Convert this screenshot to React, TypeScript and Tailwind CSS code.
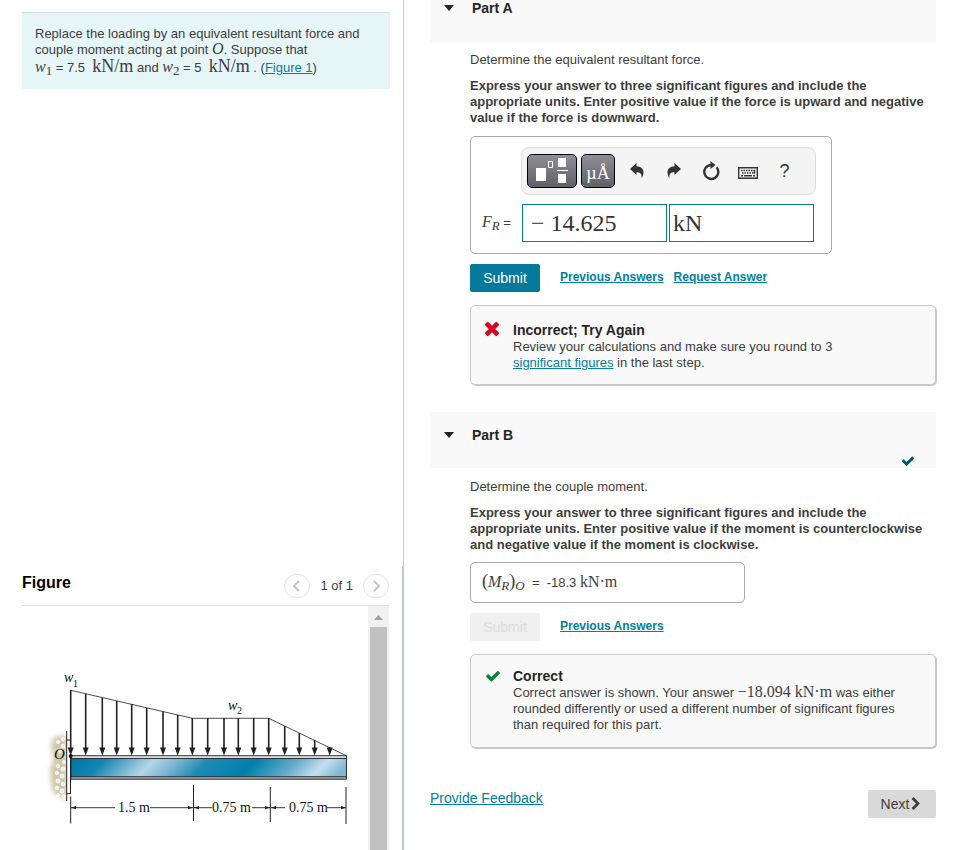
import { useState } from "react";
import type { ReactNode } from "react";

const CHECK_PATH =
  "M1671 566q0 40-28 68l-724 724-136 136q-28 28-68 28t-68-28l-136-136-362-362q-28-28-28-68t28-68l136-136q28-28 68-28t68 28l294 295 656-657q28-28 68-28t68 28l136 136q28 28 28 68z";
const TIMES_PATH =
  "M1490 1322q0 40-28 68l-136 136q-28 28-68 28t-68-28l-294-294-294 294q-28 28-68 28t-68-28l-136-136q-28-28-28-68t28-68l294-294-294-294q-28-28-28-68t28-68l136-136q28-28 68-28t68 28l294 294 294-294q28-28 68-28t68 28l136 136q28 28 28 68t-28 68l-294 294 294 294q28 28 28 68z";
const CHEVRON_PATH =
  "M1363 877l-742 742q-19 19-45 19t-45-19l-166-166q-19-19-19-45t19-45l531-531-531-531q-19-19-19-45t19-45l166-166q19-19 45-19t45 19l742 742q19 19 19 45t-19 45z";

function Glyph({ path, className, box = "0 0 1792 1792" }: { path: string; className: string; box?: string }) {
  return (
    <svg viewBox={box} fill="currentColor" className={className} aria-hidden="true">
      <path d={path} />
    </svg>
  );
}

// Serif math text, upright for units and italic for variables.
// The short line height keeps it from stretching the lines around it.
function Unit({ children, large = false }: { children: ReactNode; large?: boolean }) {
  return (
    <span className={`font-['Liberation_Serif',serif] leading-3 ${large ? "text-[18px]" : "text-[16px]"}`}>
      {children}
    </span>
  );
}

function Var({ name, sub, upright = false }: { name: string; sub?: string; upright?: boolean }) {
  return (
    <span className="font-['Liberation_Serif',serif] text-[16px] italic leading-3">
      {name}
      {sub && (
        <sub className={`bottom-[-3px] text-[13px] leading-[0] ${upright ? "not-italic" : "italic"}`}>{sub}</sub>
      )}
    </span>
  );
}

function TextLink({ children, className = "" }: { children: ReactNode; className?: string }) {
  return (
    <a href="#" className={`text-[#007fa3] underline ${className}`}>
      {children}
    </a>
  );
}

// Load arrows: x position and the height where each one starts
const ARROWS = [
  [48.7, 84], [63.7, 88], [80.3, 92], [94.7, 95], [109.7, 98], [124.7, 102], [141, 105.5], [155.7, 109],
  [170.3, 112], [185.7, 112], [202, 112], [216.3, 112], [231.7, 112], [246.7, 112],
  [262.7, 120], [277.3, 127], [292.7, 134], [307.7, 141.5],
];

const PEBBLES = [
  [41, 133, 1.6], [36, 136, 1.5], [41, 140, 1.8], [38, 145, 1.6], [42, 156, 1.5], [36, 160, 1.8], [41, 163, 2],
  [35, 167, 1.6], [40, 170, 1.9], [36, 175, 2], [41, 178, 1.7], [35, 182, 1.8], [40, 185, 2], [42, 190, 1.5], [36, 189, 1.5],
];

const DIMENSIONS = [
  { x1: 49, x2: 171, left: 93, right: 128, text: 96, label: "1.5 m" },
  { x1: 172, x2: 248, left: 190, right: 230, text: 190, label: "0.75 m" },
  { x1: 249, x2: 324, left: 263, right: 305, text: 267, label: "0.75 m" },
];

function BeamFigure() {
  return (
    <svg
      viewBox="0 0 346 244"
      className="h-[244px] w-[346px] shrink-0 font-['Liberation_Serif',serif]"
      role="img"
      aria-label="Beam under a distributed load"
    >
      <defs>
        <linearGradient id="beam" x1="48" y1="161" x2="186" y2="299" gradientUnits="userSpaceOnUse">
          <stop offset="0" stopColor="#007ba7" />
          <stop offset="0.1" stopColor="#1486b0" />
          <stop offset="0.28" stopColor="#b4d7e8" />
          <stop offset="0.36" stopColor="#7fbad3" />
          <stop offset="0.48" stopColor="#1c8bb2" />
          <stop offset="0.65" stopColor="#0080aa" />
          <stop offset="0.8" stopColor="#62aac9" />
          <stop offset="0.91" stopColor="#c3dfec" />
          <stop offset="1" stopColor="#7cb8d2" />
        </linearGradient>
        <filter id="soft" x="-50%" y="-20%" width="200%" height="140%">
          <feGaussianBlur stdDeviation="2.5" />
        </filter>
      </defs>

      {/* Wall */}
      <path d="M45 130H34q-7 5-4 15t-2 18q1 20 4 25l13 5z" fill="#cdc9ae" filter="url(#soft)" />
      <rect x="45" y="120" width="10" height="80" fill="#fff" />
      {PEBBLES.map(([cx, cy, r]) => (
        <circle key={`${cx}-${cy}`} cx={cx} cy={cy} r={r} fill="#eeecdf" stroke="#fff" strokeWidth="0.8" />
      ))}
      <path d="M44.7 125v70M44.7 134h4M44.7 187.7h4M48.5 134v54" stroke="#231f20" strokeWidth="1" fill="none" />

      {/* Beam */}
      <rect x="49" y="150" width="275.5" height="23" fill="#d5e2ea" />
      <rect x="49" y="171" width="275.5" height="2.5" fill="#a9adb5" />
      <rect x="49" y="152.5" width="275.5" height="18.2" fill="url(#beam)" />
      <path d="M49 149.7h275.5v23.5H49zM49 152.5h275.5M49 170.7h275.5" stroke="#231f20" strokeWidth="0.9" fill="none" />

      {/* Distributed load */}
      <path d="M48.7 84.3l121.6 28h76.4l77.6 37.4" stroke="#231f20" strokeWidth="0.8" fill="none" />
      {ARROWS.map(([x, top]) => (
        <g key={x}>
          <path d={`M${x} ${top}V145`} stroke="#231f20" strokeWidth="1.6" />
          <path d={`M${x - 3} 141.5h6l-3 8z`} fill="#231f20" />
        </g>
      ))}
      <circle cx="48.7" cy="150" r="2" fill="#111" />

      {/* Dimension lines */}
      <path d="M48.7 190.5v27M171.5 179v36M248.3 181v35M324 181v37" stroke="#231f20" strokeWidth="1" />
      {DIMENSIONS.map((d) => (
        <g key={d.x1}>
          <path d={`M${d.x1} 201.7H${d.left}M${d.right} 201.7H${d.x2}`} stroke="#231f20" strokeWidth="0.9" />
          <path d={`M${d.x1} 201.7l5-1.6v3.2zM${d.x2} 201.7l-5-1.6v3.2z`} fill="#231f20" />
          <text x={d.text} y="206" fontSize="14" fill="#111">{d.label}</text>
        </g>
      ))}

      <text x="42" y="76" fontSize="14" fontStyle="italic" fill="#111">w</text>
      <text x="51" y="81" fontSize="10" fill="#111">1</text>
      <text x="206" y="104" fontSize="14" fontStyle="italic" fill="#111">w</text>
      <text x="215" y="108" fontSize="10" fill="#111">2</text>
      <text x="32" y="153" fontSize="15" fontStyle="italic" fill="#111">O</text>
    </svg>
  );
}

function PagerButton({ label, d }: { label: string; d: string }) {
  return (
    <button
      type="button"
      aria-label={label}
      className="flex h-6 w-[26px] items-center justify-center rounded-full border border-[#e3e3e3]"
    >
      <svg viewBox="0 0 12 12" className="size-3" fill="none" stroke="#c4c4c4" strokeWidth="2">
        <path d={d} />
      </svg>
    </button>
  );
}

function ProblemPanel() {
  return (
    <div className="grid h-screen w-5/12 min-w-[404px] shrink-0 grid-rows-[1fr_284px]">
      <div className="border-r border-[#bccbdb] pl-[22px] pr-[13px] pt-3">
        <div className="border-t border-[#d5dddd] bg-[#e6f5f6] px-[13px] pb-[11px] pt-[13px] text-[13px] leading-4">
          <p>
            Replace the loading by an equivalent resultant force and
            <br />
            couple moment acting at point <Var name="O" />. Suppose that
          </p>
          <p className="leading-5">
            <Var name="w" sub="1" upright /> = 7.5 &nbsp;<Unit large>kN/m</Unit> and{" "}
            <Var name="w" sub="2" upright /> = 5 &nbsp;<Unit large>kN/m</Unit> . (<TextLink>Figure 1</TextLink>)
          </p>
        </div>
      </div>

      <div className="flex min-h-0 flex-col border-r-2 border-[#b7cade] pl-[22px] pr-[13px]">
        <div className="flex h-10 shrink-0 items-center justify-between border-b border-[#dddddd]">
          <h2 className="pb-1.5 text-[16px] font-bold leading-5 text-black">Figure</h2>
          <div className="flex items-center gap-[10px]">
            <PagerButton label="Previous figure" d="M8 1L3 6l5 5" />
            <span className="text-[13px] leading-5">1 of 1</span>
            <PagerButton label="Next figure" d="M4 1l5 5-5 5" />
          </div>
        </div>
        <div className="flex min-h-0 flex-1 justify-between overflow-hidden">
          <BeamFigure />
          <div className="flex w-[21px] shrink-0 flex-col items-center bg-[#f1f1f1]">
            <svg viewBox="0 0 21 21" className="size-[21px] shrink-0">
              <path d="M6 14l4.5-5 4.5 5z" fill="#a3a3a3" />
            </svg>
            <div className="w-[17px] flex-1 bg-[#c1c1c1]" />
          </div>
        </div>
      </div>
    </div>
  );
}

function PartHeader({ title, open, onToggle }: { title: string; open: boolean; onToggle: () => void }) {
  return (
    <button
      type="button"
      aria-expanded={open}
      onClick={onToggle}
      className="flex items-center gap-[18px] text-[14px] font-bold leading-4 text-[#252525]"
    >
      <svg viewBox="0 0 10 6" className="h-[6px] w-[10px]" fill="currentColor">
        <path d="M0 0h10L5 6z" />
      </svg>
      {title}
    </button>
  );
}

function ToolButton({ label, children }: { label: string; children: ReactNode }) {
  return (
    <button type="button" aria-label={label} className="flex h-8 w-[37px] items-center justify-center text-[#333333]">
      {children}
    </button>
  );
}

function Toolbar() {
  return (
    <div className="flex h-12 w-[295px] items-center rounded-lg border border-[#dddddd] bg-[#f4f4f4] pl-[5px]">
      <button
        type="button"
        aria-label="Templates"
        className="mr-1 flex h-[34px] w-[50px] items-center justify-center rounded-[5px] border border-black bg-linear-to-b from-[#908f98] to-[#606065]"
      >
        <svg viewBox="0 0 32 28" className="h-7 w-8">
          <path d="M0 11h10v13H0z" fill="#fff" />
          <path d="M12.5 4.5h4v6h-4z" fill="none" stroke="#fff" />
          <path d="M22 1h8v9h-8zM21 13h11v1H21zM22 17h8v9h-8z" fill="#fff" />
        </svg>
      </button>
      <button
        type="button"
        aria-label="Units"
        className="h-[34px] w-[34px] rounded-[5px] border border-black bg-linear-to-b from-[#908f98] to-[#606065] pt-1 font-['Liberation_Serif',serif] text-[18px] leading-none text-white"
      >
        µÅ
      </button>
      <div className="flex pl-[3px]">
        <ToolButton label="Undo">
          <svg viewBox="0 0 14 16" className="h-4 w-[14px]" fill="currentColor">
            <path d="M0 6L6.5 0v3.2C12.5 3.5 16 8 11.5 15.5c.6-4.6-1-6.3-5-6.3V12z" />
          </svg>
        </ToolButton>
        <ToolButton label="Redo">
          <svg viewBox="0 0 14 16" className="h-4 w-[14px]" fill="currentColor">
            <path d="M14 6L7.5 0v3.2C1.5 3.5-2 8 2.5 15.5c-.6-4.6 1-6.3 5-6.3V12z" />
          </svg>
        </ToolButton>
        <ToolButton label="Reset">
          <svg viewBox="0 0 18 20" className="h-5 w-[18px]" fill="none" stroke="currentColor" strokeWidth="2.4">
            <path d="M14.5 6.3A7 7 0 1 1 9 4" />
            <path d="M8.5 0L13.5 4l-5 4z" fill="currentColor" stroke="none" />
          </svg>
        </ToolButton>
        <ToolButton label="Keyboard">
          <svg viewBox="0 0 20 12" className="mt-1 h-3 w-5" fill="none" stroke="currentColor">
            <path d="M.7.7h18.6v10.6H.7z" strokeWidth="1.4" />
            <path d="M3 3.5h13M4 6h12" strokeWidth="1.5" strokeDasharray="1.5 1" />
            <path d="M16.5 2.8v4M3 8.7h2M6 8.7h8M15 8.7h2" strokeWidth="1.5" />
          </svg>
        </ToolButton>
        <ToolButton label="Help">
          <span className="text-[18px] leading-none">?</span>
        </ToolButton>
      </div>
    </div>
  );
}

function SubmitRow({ disabled = false, children }: { disabled?: boolean; children: ReactNode }) {
  return (
    <div className="mt-[10px] flex gap-5">
      <button
        type="submit"
        disabled={disabled}
        className="h-7 w-[70px] rounded-[2px] bg-[#047a9c] text-[14px] leading-5 text-white disabled:bg-[#f0f0f0] disabled:text-[#dcdcdc]"
      >
        Submit
      </button>
      <div className="flex gap-[10px] pt-[5px] text-[12px] font-bold leading-4">{children}</div>
    </div>
  );
}

export default function App() {
  const [openA, setOpenA] = useState(true);
  const [openB, setOpenB] = useState(true);
  const [force, setForce] = useState("− 14.625");
  const [units, setUnits] = useState("kN");

  return (
    <div className="flex h-screen overflow-hidden bg-white font-['Liberation_Sans',Arial,sans-serif] text-[13px] leading-4 text-[#3d3d3d]">
      <ProblemPanel />

      <main className="min-w-0 flex-1 pl-[26px] pr-8">
        {/* Part A */}
        <div className="h-[42px] bg-[#f9f9f9] pl-[14px]">
          <PartHeader title="Part A" open={openA} onToggle={() => setOpenA(!openA)} />
        </div>
        {openA && (
          <form className="pl-10 pt-[10px]" onSubmit={(e) => e.preventDefault()}>
            <p>Determine the equivalent resultant force.</p>
            <p className="mt-[10px] font-bold">
              Express your answer to three significant figures and include the
              <br />
              appropriate units. Enter positive value if the force is upward and negative
              <br />
              value if the force is downward.
            </p>
            <div className="mt-[10px] w-[362px] rounded-[5px] border border-[#a9a9a9] pb-[11px] pl-[11px] pt-[10px]">
              <div className="pl-[39px]">
                <Toolbar />
              </div>
              <div className="mt-[9px] flex items-center">
                <label htmlFor="force" className="w-10">
                  <Var name="F" sub="R" /> =
                </label>
                <input
                  id="force"
                  value={force}
                  onChange={(e) => setForce(e.target.value)}
                  className="h-[38px] w-[145px] border border-[#047a9c] px-2 font-['Liberation_Serif',serif] text-[24px] text-[#333333]"
                />
                <input
                  aria-label="Units"
                  value={units}
                  onChange={(e) => setUnits(e.target.value)}
                  className="ml-[2px] h-[38px] w-[145px] border border-[#047a9c] px-[3px] font-['Liberation_Serif',serif] text-[24px] text-[#333333]"
                />
              </div>
            </div>
            <SubmitRow>
              <TextLink>Previous Answers</TextLink>
              <TextLink>Request Answer</TextLink>
            </SubmitRow>
            <div className="mt-[13px] flex rounded-[5px] border border-[#c9c9c9] bg-[#f9f9f9] pb-[13px] pl-[14px] pt-4 shadow-[1px_1px_0_#c9c9c9]">
              <Glyph path={TIMES_PATH} box="302 366 1188 1188" className="mr-[14px] size-[14px] shrink-0 text-[#db0020]" />
              <div>
                <h3 className="text-[14px] font-bold text-[#252525]">Incorrect; Try Again</h3>
                <p className="pt-px">
                  Review your calculations and make sure you round to 3
                  <br />
                  <TextLink>significant figures</TextLink> in the last step.
                </p>
              </div>
            </div>
          </form>
        )}

        {/* Part B */}
        <div className="mt-[27px] flex h-14 justify-between bg-[#f9f9f9] pl-[14px] pr-[21px]">
          <div className="pt-[15px]">
            <PartHeader title="Part B" open={openB} onToggle={() => setOpenB(!openB)} />
          </div>
          <Glyph path={CHECK_PATH} className="size-[14px] self-end text-[#005a70]" />
        </div>
        {openB && (
          <form className="pl-10 pt-[11px]" onSubmit={(e) => e.preventDefault()}>
            <p>Determine the couple moment.</p>
            <p className="mt-[10px] font-bold">
              Express your answer to three significant figures and include the
              <br />
              appropriate units. Enter positive value if the moment is counterclockwise
              <br />
              and negative value if the moment is clockwise.
            </p>
            <div className="mt-[9px] flex h-[41px] w-[275px] items-center rounded-[5px] border border-[#a9a9a9] pl-[11px]">
              <p>
                <Unit large>(</Unit>
                <Var name="M" sub="R" />
                <Unit large>)</Unit>
                <Var name="" sub="O" />&nbsp; = &nbsp;-18.3 <Unit>kN·m</Unit>
              </p>
            </div>
            <SubmitRow disabled>
              <TextLink>Previous Answers</TextLink>
            </SubmitRow>
            <div className="mt-[13px] flex rounded-[5px] border border-[#c9c9c9] bg-[#f9f9f9] pb-[14px] pl-[14px] pt-[13px] shadow-[1px_1px_0_#c9c9c9]">
              <Glyph path={CHECK_PATH} className="mr-3 size-4 shrink-0 text-[#038238]" />
              <div>
                <h3 className="text-[14px] font-bold text-[#252525]">Correct</h3>
                <p className="pt-px">
                  Correct answer is shown. Your answer <Unit>−18.094 kN·m</Unit> was either
                  <br />
                  rounded differently or used a different number of significant figures
                  <br />
                  than required for this part.
                </p>
              </div>
            </div>
          </form>
        )}

        <div className="mt-[42px] flex justify-between">
          <TextLink className="text-[14px]">Provide Feedback</TextLink>
          <button
            type="button"
            className="flex h-7 w-[68px] items-center justify-center rounded-[2px] bg-[#d9d9d9] text-[14px]"
          >
            Next
            <Glyph path={CHEVRON_PATH} className="size-[14px]" />
          </button>
        </div>
      </main>
    </div>
  );
}
